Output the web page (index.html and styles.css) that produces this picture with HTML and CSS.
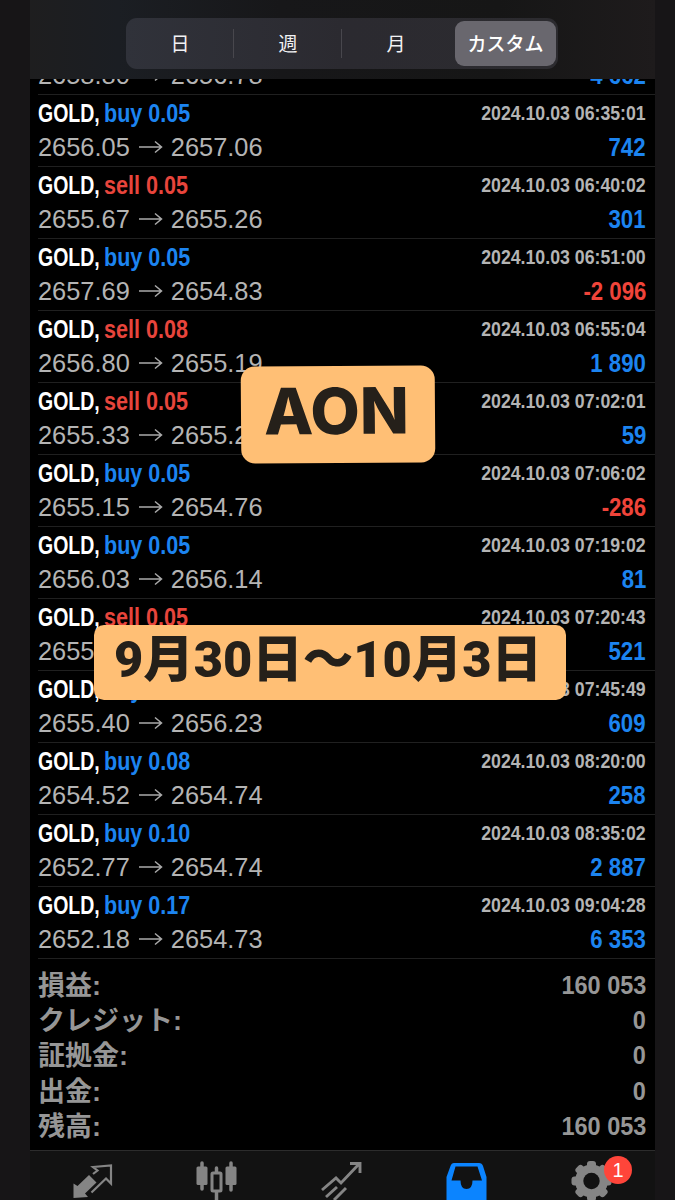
FILE: index.html
```html
<!DOCTYPE html>
<html lang="ja">
<head>
  <meta charset="UTF-8" />
  <meta name="viewport" content="width=device-width, initial-scale=1.0" />
  <title>取引履歴</title>
  <link rel="stylesheet" href="styles.css">
</head>
<body>
  <div class="app">
    <header class="header">
      <div class="segments">
        <span class="segment">日</span>
        <span class="segment">週</span>
        <span class="segment">月</span>
        <span class="segment active">カスタム</span>
      </div>
    </header>

    <main class="deals" id="deals"></main>

    <section class="summary">
      <div class="summary-row"><span>損益:</span><span class="total">160 053</span></div>
      <div class="summary-row"><span>クレジット:</span><span class="total">0</span></div>
      <div class="summary-row"><span>証拠金:</span><span class="total">0</span></div>
      <div class="summary-row"><span>出金:</span><span class="total">0</span></div>
      <div class="summary-row"><span>残高:</span><span class="total">160 053</span></div>
    </section>

    <nav class="tabbar">
      <div class="tab">
        <svg width="44" height="44" viewBox="0 0 44 44">
          <path d="M2.500 39V24.500L6.500 27L18 16L25.500 23.500L14 34.500L17 38Z" fill="#858585"/>
          <path d="M22 15L26.500 11.500L22 8L40 6.500V24.500L35 19.500L20.500 33.500" fill="none" stroke="#858585" stroke-width="2.200"/>
        </svg>
      </div>
      <div class="tab">
        <svg width="44" height="44" viewBox="0 0 44 44">
          <path d="M6 4V30M35 4V31M20.500 9V13M20.500 33V42" stroke="#858585" stroke-width="3.500" stroke-linecap="round"/>
          <rect x="0.500" y="7.500" width="11" height="18.500" rx="1.500" fill="#858585"/>
          <rect x="29.500" y="7.500" width="11" height="18.500" rx="1.500" fill="#858585"/>
          <rect x="16" y="14" width="9" height="18" rx="1" fill="none" stroke="#858585" stroke-width="3"/>
        </svg>
      </div>
      <div class="tab">
        <svg width="44" height="44" viewBox="0 0 44 44">
          <path d="M1 31L15 19L20 24L38 5M29 4.500H39V14M5 38L16 28M13 41L25 29" fill="none" stroke="#858585" stroke-width="2.900"/>
        </svg>
      </div>
      <div class="tab">
        <svg width="44" height="44" viewBox="0 0 44 44">
          <path fill-rule="evenodd" d="M8 4H33Q36 4 37 7L40.500 18V44H0.500V18L4.500 7Q5.500 4 8 4ZM9.500 7.500L5.500 21.500H14.500Q14.500 30 20.500 30Q26.500 30 26.500 21.500H36L31.500 7.500Z" fill="#0b84ff"/>
        </svg>
      </div>
      <div class="tab">
        <svg width="44" height="44" viewBox="0 0 44 44">
          <g fill="#858585">
            <rect x="16" y="2" width="9" height="40" rx="3"/>
            <rect x="16" y="2" width="9" height="40" rx="3" transform="rotate(45 20.500 22)"/>
            <rect x="16" y="2" width="9" height="40" rx="3" transform="rotate(90 20.500 22)"/>
            <rect x="16" y="2" width="9" height="40" rx="3" transform="rotate(135 20.500 22)"/>
            <circle cx="20.500" cy="22" r="16.500"/>
          </g>
          <circle cx="20.500" cy="22" r="8.200" fill="#121212"/>
        </svg>
        <span class="badge">1</span>
      </div>
    </nav>
  </div>

  <div class="sticker sticker-name">AON</div>
  <div class="sticker sticker-date">9月30日〜10月3日</div>

  <script>
    const deals = [
      ["buy", "0.05", "2658.80", "2656.78", "2024.10.03 06:30:01", "4 662"],
      ["buy", "0.05", "2656.05", "2657.06", "2024.10.03 06:35:01", "742"],
      ["sell", "0.05", "2655.67", "2655.26", "2024.10.03 06:40:02", "301"],
      ["buy", "0.05", "2657.69", "2654.83", "2024.10.03 06:51:00", "-2 096"],
      ["sell", "0.08", "2656.80", "2655.19", "2024.10.03 06:55:04", "1 890"],
      ["sell", "0.05", "2655.33", "2655.21", "2024.10.03 07:02:01", "59"],
      ["buy", "0.05", "2655.15", "2654.76", "2024.10.03 07:06:02", "-286"],
      ["buy", "0.05", "2656.03", "2656.14", "2024.10.03 07:19:02", "81"],
      ["sell", "0.05", "2655.90", "2655.19", "2024.10.03 07:20:43", "521"],
      ["buy", "0.05", "2655.40", "2656.23", "2024.10.03 07:45:49", "609"],
      ["buy", "0.08", "2654.52", "2654.74", "2024.10.03 08:20:00", "258"],
      ["buy", "0.10", "2652.77", "2654.74", "2024.10.03 08:35:02", "2 887"],
      ["buy", "0.17", "2652.18", "2654.73", "2024.10.03 09:04:28", "6 353"]
    ];

    const list = document.getElementById("deals");

    deals.forEach(([side, lot, open, close, time, profit]) => {
      const row = document.createElement("div");
      row.className = "deal";
      row.innerHTML = `
        <div class="line">
          <span class="symbol">GOLD,</span>
          <span class="side ${side}">${side} ${lot}</span>
          <span class="time">${time}</span>
        </div>
        <div class="line">
          <span class="prices">${open}<svg class="arrow" width="24" height="14" viewBox="0 0 24 14"><path d="M0 7H22M16 1.500L22.500 7L16 12.500" fill="none" stroke="#aaa" stroke-width="1.500"/></svg>${close}</span>
          <span class="profit ${profit.startsWith("-") ? "loss" : ""}">${profit}</span>
        </div>
      `;
      list.appendChild(row);
    });
  </script>
</body>
</html>
```
FILE: styles.css
```css
body {
  margin: 0;
  height: 1200px;
  overflow: hidden;
  position: relative;
  background-color: #171517;
  font-family: "Liberation Sans", "Noto Sans CJK JP", sans-serif;
  color: #b4b4b4;
}

.app {
  width: 625px;
  height: 1200px;
  margin: 0 20px 0 30px;
  display: flex;
  flex-direction: column;
  background-color: #000;
}

/* 期間の切り替え */
.header {
  height: 61px;
  flex: none;
  padding-top: 18px;
  background: linear-gradient(90deg, #1e1e1f 0%, #1b1e23 14%, #171719 40%, #161616 75%, #1e1b1c 100%);
}

.segments {
  display: grid;
  grid-template-columns: repeat(4, 1fr);
  width: 432px;
  height: 51px;
  margin-left: 96px;
  border-radius: 11px;
  background: linear-gradient(90deg, #30323a, #2b2a30 50%, #2c2b2f);
}

.segment {
  display: flex;
  align-items: center;
  justify-content: center;
  padding-bottom: 1px;
  font-family: "Noto Sans CJK JP", sans-serif;
  font-size: 19px;
  line-height: 28px;
  color: #f2f2f4;
  background: linear-gradient(#48474d, #48474d) right center / 1px 29px no-repeat;
}

.segment:nth-child(3) {
  background: none;
}

.segment.active {
  margin: 3px 2px 3px 5px;
  border-radius: 9px;
  background: #69676e;
  font-weight: 500;
  color: #fff;
}

/* 取引一覧 */
.deals {
  height: 880px;
  flex: none;
  overflow: hidden;
  display: flex;
  flex-direction: column;
  justify-content: flex-end;
}

.deal {
  height: 71px;
  flex: none;
  margin-left: 8px;
  padding-right: 9px;
  border-bottom: 1px solid #202020;
}

.line {
  display: flex;
  justify-content: space-between;
  height: 35px;
  line-height: 36px;
  white-space: nowrap;
}

.symbol,
.side {
  font-size: 25.5px;
  font-weight: bold;
  transform-origin: left;
}

.symbol {
  width: 66px;
  color: #fff;
  transform: scaleX(0.765);
}

.side {
  transform: scaleX(0.845);
}

.buy {
  color: #1c84f0;
}

.sell {
  color: #e8453c;
}

.time {
  margin-left: auto;
  font-size: 20px;
  font-weight: bold;
  transform: scaleX(0.886);
  transform-origin: right;
}

.prices {
  display: flex;
  align-items: center;
  height: 33px;
  font-size: 25.4px;
}

.arrow {
  margin: 0 8px 0 9px;
}

.profit {
  font-size: 25.5px;
  line-height: 34px;
  font-weight: bold;
  color: #1c84f0;
  transform: scaleX(0.87);
  transform-origin: right;
}

.loss {
  color: #f0443a;
}

/* 合計 */
.summary {
  height: 182px;
  flex: none;
  padding: 9px 9px 0 8px;
}

.summary-row {
  display: flex;
  justify-content: space-between;
  height: 35.2px;
  line-height: 37px;
  font-size: 27px;
  font-weight: bold;
  color: #969696;
}

.total {
  font-size: 25px;
  line-height: 35px;
  transform: scaleX(0.94);
  transform-origin: right;
}

/* 下部タブ */
.tabbar {
  flex: 1;
  display: grid;
  grid-template-columns: repeat(5, 1fr);
  border-top: 1px solid #2c2c2c;
  background-color: #121212;
}

.tab {
  position: relative;
  display: flex;
  justify-content: center;
  padding-top: 8px;
}

.badge {
  position: absolute;
  top: 5px;
  right: 23px;
  width: 28px;
  height: 28px;
  border-radius: 50%;
  background-color: #ff453a;
  color: #fff;
  font-size: 20px;
  line-height: 28px;
  text-align: center;
}

/* ステッカー */
.sticker {
  position: absolute;
  box-sizing: border-box;
  background-color: #ffbf75;
  color: #25201a;
  text-align: center;
  white-space: nowrap;
}

.sticker-name {
  left: 241px;
  top: 366px;
  width: 194px;
  height: 97px;
  padding-right: 3px;
  border-radius: 14px;
  font-family: Inter, sans-serif;
  font-weight: 800;
  font-size: 64px;
  line-height: 90px;
  transform: rotate(-0.4deg);
}

.sticker-date {
  left: 94px;
  top: 625px;
  width: 472px;
  height: 75px;
  padding-right: 4px;
  border-radius: 10px;
  font-family: Roboto, "Noto Sans CJK JP", sans-serif;
  font-weight: 900;
  font-size: 50.5px;
  line-height: 70px;
}
```
